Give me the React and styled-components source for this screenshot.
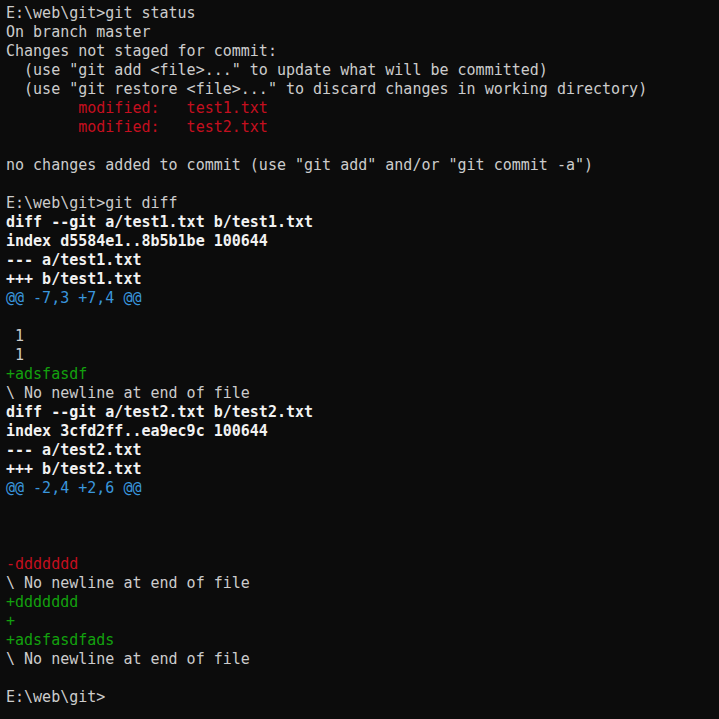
import React from 'react';
import styled, { createGlobalStyle } from 'styled-components';

const GlobalStyle = createGlobalStyle`
    html, body {
        margin: 0;
        padding: 0;
        background: #0c0c0c;
    }
`;

const Terminal = styled.div`
    width: 719px;
    height: 719px;
    box-sizing: border-box;
    padding: 4px 6px 0 6px;
    background: #0c0c0c;
    color: #cccccc;
    font-family: 'DejaVu Sans Mono', 'Liberation Mono', monospace;
    font-size: 15px;
    line-height: 19px;
    overflow: hidden;
`;

const colors = {
    plain: '#cccccc',
    head: '#f2f2f2',
    red: '#c50f1f',
    green: '#13a10e',
    cyan: '#3a96dd',
};

const Line = styled.div`
    height: 19px;
    white-space: pre;
    color: ${(p) => colors[p.$tone || 'plain']};
    font-weight: ${(p) => (p.$bold ? 'bold' : 'normal')};
`;

const lines = [
    ['E:\\web\\git>git status'],
    ['On branch master'],
    ['Changes not staged for commit:'],
    ['  (use "git add <file>..." to update what will be committed)'],
    ['  (use "git restore <file>..." to discard changes in working directory)'],
    ['        modified:   test1.txt', 'red'],
    ['        modified:   test2.txt', 'red'],
    [''],
    ['no changes added to commit (use "git add" and/or "git commit -a")'],
    [''],
    ['E:\\web\\git>git diff'],
    ['diff --git a/test1.txt b/test1.txt', 'head', true],
    ['index d5584e1..8b5b1be 100644', 'head', true],
    ['--- a/test1.txt', 'head', true],
    ['+++ b/test1.txt', 'head', true],
    ['@@ -7,3 +7,4 @@', 'cyan'],
    [''],
    [' 1'],
    [' 1'],
    ['+adsfasdf', 'green'],
    ['\\ No newline at end of file'],
    ['diff --git a/test2.txt b/test2.txt', 'head', true],
    ['index 3cfd2ff..ea9ec9c 100644', 'head', true],
    ['--- a/test2.txt', 'head', true],
    ['+++ b/test2.txt', 'head', true],
    ['@@ -2,4 +2,6 @@', 'cyan'],
    [''],
    [''],
    [''],
    ['-ddddddd', 'red'],
    ['\\ No newline at end of file'],
    ['+ddddddd', 'green'],
    ['+', 'green'],
    ['+adsfasdfads', 'green'],
    ['\\ No newline at end of file'],
    [''],
    ['E:\\web\\git>'],
];

function App() {
    return (
        <>
            <GlobalStyle />
            <Terminal>
                {lines.map(([text, tone, bold], i) => (
                    <Line key={i} $tone={tone} $bold={bold}>
                        {text}
                    </Line>
                ))}
            </Terminal>
        </>
    );
}

export default App;
